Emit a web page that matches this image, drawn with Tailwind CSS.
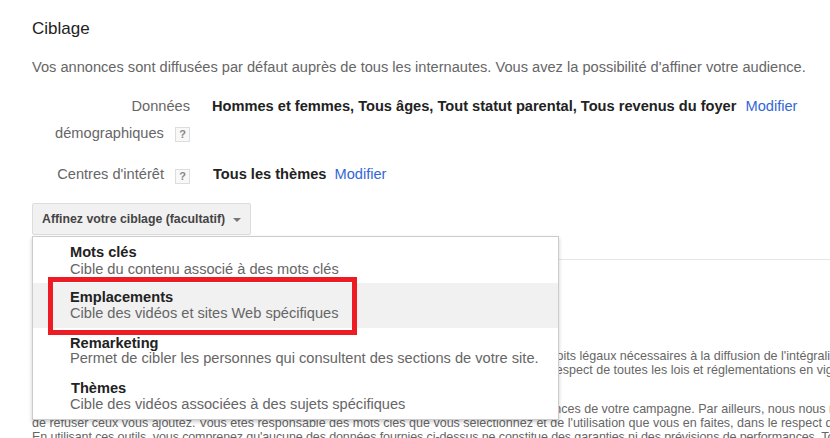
<!DOCTYPE html>
<html lang="fr">
<head>
    <meta charset="UTF-8">
    <title>Ciblage</title>
    <script src="https://cdn.jsdelivr.net/npm/@tailwindcss/browser@4"></script>
</head>
<body class="bg-white">
    <div class="relative w-[830px] h-[438px] overflow-hidden font-['Liberation_Sans',Arial,sans-serif] text-[14.62px] text-[#666]">
        <div class="flex flex-col pl-8 pt-[19px]">
            <h2 class="text-[17px] leading-[19px] text-[#222]">Ciblage</h2>
            <p class="mt-[20px] leading-[18px] whitespace-nowrap">Vos annonces sont diffusées par défaut auprès de tous les internautes. Vous avez la possibilité d'affiner votre audience.</p>

            <div class="flex mt-[17px]">
                <div class="w-[158px] text-right leading-[27px] pl-[18px]">
                    Données<br>démographiques <span class="inline-flex items-center justify-center w-[15px] h-[15px] ml-[7px] align-[0px] border border-[#ddd] bg-[#f8f8f8] text-[11px] font-bold text-[#888]">?</span>
                </div>
                <div class="ml-[22px] leading-[27px] whitespace-nowrap">
                    <b class="font-bold text-[#222]">Hommes et femmes, Tous âges, Tout statut parental, Tous revenus du foyer</b>
                    <a class="ml-[5px] text-[#3367d6]">Modifier</a>
                </div>
            </div>

            <div class="flex mt-[14px]">
                <div class="w-[158px] text-right leading-[27px]">
                    Centres d'intérêt <span class="inline-flex items-center justify-center w-[15px] h-[15px] ml-[7px] align-[-1px] border border-[#ddd] bg-[#f8f8f8] text-[11px] font-bold text-[#888]">?</span>
                </div>
                <div class="ml-[23px] leading-[27px] whitespace-nowrap">
                    <b class="font-bold text-[#222]">Tous les thèmes</b>
                    <a class="ml-[4px] text-[#3367d6]">Modifier</a>
                </div>
            </div>

            <button class="mt-[15px] flex items-center self-start h-[32px] w-[219px] pl-[9px] bg-[#f1f1f1] border border-[#dcdcdc] rounded-[2px] text-[12.3px] font-bold text-[#444]">
                Affinez votre ciblage (facultatif)
                <span class="ml-[8px] mt-[1px] border-x-[4px] border-x-transparent border-t-[4px] border-t-[#777]"></span>
            </button>

            <div class="mt-[24px] ml-[526px] h-px bg-[#e5e5e5]"></div>

            <div class="mt-[89px] text-[12.53px] leading-[14px] whitespace-nowrap">
                <p>Vous certifiez dès ce jour que vous disposez de tous les droits et autorisations ainsi que des droits légaux nécessaires à la diffusion de l'intégralité de vos annonces</p>
                <p>et que celles-ci sont conformes à nos règles, ainsi que vous en assurez dans ce pays le plein respect de toutes les lois et réglementations en vigueur</p>
                <p class="mt-[25px]">Nous ne garantissons aucun résultat quant aux coûts, aux devis, à la diffusion ni aux performances de votre campagne. Par ailleurs, nous nous réservons le droit</p>
                <p>de refuser ceux vous ajoutez. Vous êtes responsable des mots clés que vous sélectionnez et de l'utilisation que vous en faites, dans le respect de la loi.</p>
                <p class="tracking-[-0.12px]">En utilisant ces outils, vous comprenez qu'aucune des données fournies ci-dessus ne constitue des garanties ni des prévisions de performances. Toutes</p>
            </div>
        </div>

        <!-- menu ouvert -->
        <div class="absolute left-[32px] top-[236px] w-[527px] h-[184px] flex flex-col pt-[1px] bg-white border border-[#ccc] shadow-[0_2px_4px_rgba(0,0,0,0.2)] leading-[16px]">
            <div class="h-[45px] pl-[37px] pt-[6px]">
                <div class="font-bold text-[#222]">Mots clés</div>
                <div class="mt-px">Cible du contenu associé à des mots clés</div>
            </div>
            <div class="h-[45px] pl-[37px] pt-[6px] bg-[#f1f1f1]">
                <div class="font-bold text-[#222]">Emplacements</div>
                <div>Cible des vidéos et sites Web spécifiques</div>
            </div>
            <div class="h-[45px] pl-[37px] pt-[7px]">
                <div class="font-bold text-[#222]">Remarketing</div>
                <div class="-mt-px">Permet de cibler les personnes qui consultent des sections de votre site.</div>
            </div>
            <div class="h-[45px] pl-[37px] pt-[7px]">
                <div class="font-bold text-[#222] pl-px">Thèmes</div>
                <div>Cible des vidéos associées à des sujets spécifiques</div>
            </div>
        </div>

        <!-- annotation rouge -->
        <div class="absolute left-[48px] top-[277px] w-[309px] h-[58px] border-[5px] border-[#ed1c24]"></div>
    </div>
</body>
</html>
